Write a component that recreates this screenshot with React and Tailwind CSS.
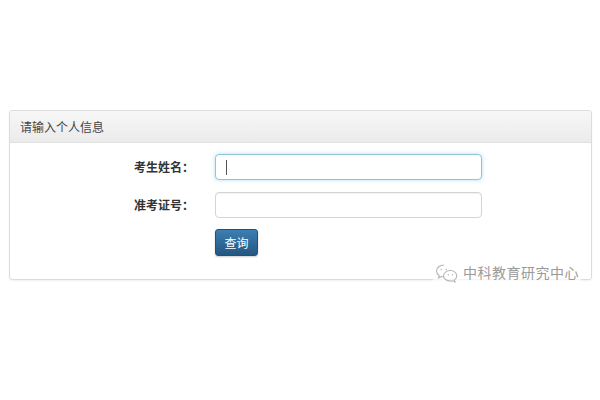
import React from "react";

const WeChatIcon = () => (
	<svg width="24" height="20" viewBox="0 0 24 20" fill="none" stroke="#b5b5b5" strokeWidth="1.1">
		<path d="M9 2C4.8 2 1.5 4.7 1.5 8c0 1.9 1.1 3.6 2.8 4.7L3.6 15l2.7-1.4c.9.3 1.8.4 2.7.4" />
		<path d="M15.5 7.5c-3.9 0-7 2.4-7 5.3s3.1 5.3 7 5.3c.8 0 1.5-.1 2.2-.3l2.3 1.2-.6-2c1.5-1 2.4-2.5 2.4-4.2 0-2.9-3.1-5.3-6.3-5.3z" />
		<circle cx="6.3" cy="6.5" r="0.8" fill="#b5b5b5" stroke="none" />
		<circle cx="11.3" cy="6.5" r="0.8" fill="#b5b5b5" stroke="none" />
		<circle cx="13.3" cy="11.8" r="0.7" fill="#b5b5b5" stroke="none" />
		<circle cx="17.5" cy="11.8" r="0.7" fill="#b5b5b5" stroke="none" />
	</svg>
);

const Row = ({ label, focused }) => (
	<div className="flex items-center">
		<div className="w-[184px] text-right text-[12px] font-bold text-[#333]">
			{label}
		</div>
		<div className="ml-[21px]">
			<div
				className={`w-[267px] h-[26px] rounded-[4px] border bg-white flex items-center px-[10px] ${
					focused
						? "border-[#8ec6d6] shadow-[0_0_4px_rgba(102,175,233,0.45)]"
						: "border-[#d4d4d4] shadow-[inset_0_1px_1px_rgba(0,0,0,0.06)]"
				}`}
			>
				{focused && <div className="w-px h-[15px] bg-[#555]" />}
			</div>
		</div>
	</div>
);

export default function App() {
	return (
		<div
			className="w-[600px] h-[400px] bg-white relative"
			style={{ fontFamily: '"Noto Sans CJK SC", "Liberation Sans", sans-serif' }}
		>
			<div className="pt-[110px] px-[9px]">
				<div className="w-[583px] border border-[#dcdcdc] rounded-[3px] shadow-[0_1px_2px_rgba(0,0,0,0.06)] overflow-hidden">
					<div className="h-[32px] bg-gradient-to-b from-[#f7f7f7] to-[#ebebeb] border-b border-[#e0e0e0] flex items-center px-[10px] text-[12px] text-[#444]">
						请输入个人信息
					</div>
					<div className="pt-[11px] pb-[23px] flex flex-col gap-[12px]">
						<Row label="考生姓名：" focused />
						<Row label="准考证号：" />
						<div className="flex mt-[-1px]">
							<div className="w-[184px]" />
							<button className="ml-[21px] w-[43px] h-[27px] rounded-[3px] bg-gradient-to-b from-[#3d7eb4] to-[#245782] border border-[#21507a] text-white text-[12px] shadow-[0_1px_2px_rgba(0,0,0,0.2)]">
								查询
							</button>
						</div>
					</div>
				</div>
			</div>
			<div className="absolute left-[433px] top-[262px] flex items-center gap-[4px] bg-white/70 px-[2px]">
				<WeChatIcon />
				<span className="text-[14px] text-[#9a9a9a] tracking-[0.5px]">中科教育研究中心</span>
			</div>
		</div>
	);
}
